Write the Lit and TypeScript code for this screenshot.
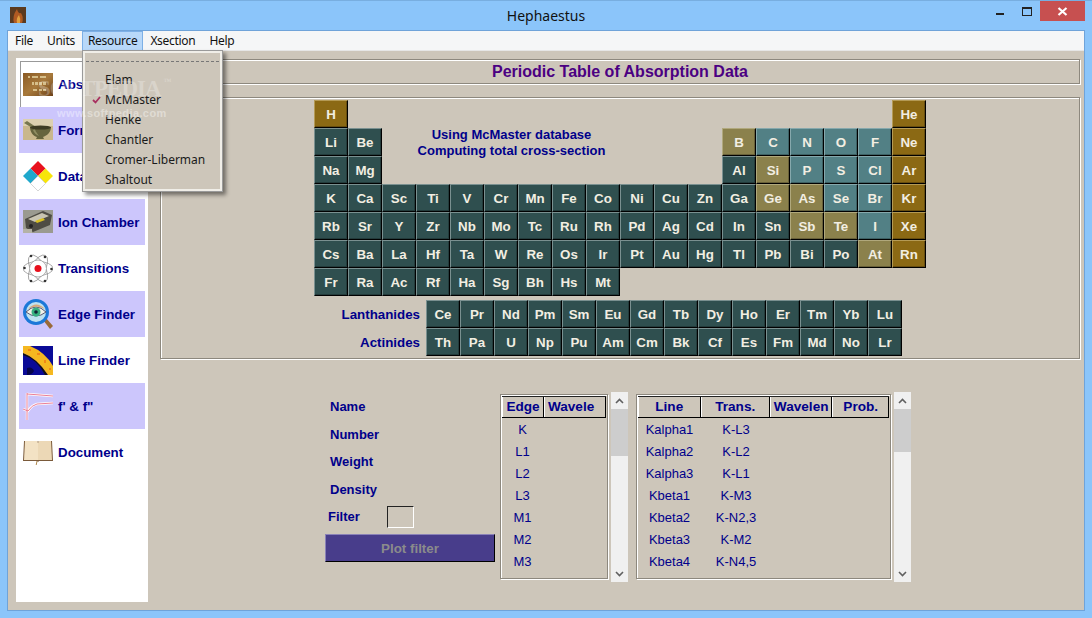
import { LitElement, html, css, svg } from "lit";
import { customElement } from "lit/decorators.js";

type Cell = { s: string; c: number; r: number; k: string };
const build = (rows: [number, string, string][]): Cell[] =>
  rows.flatMap(([r, start, list]) => {
    const out: Cell[] = [];
    for (const part of list.split(" ")) {
      const [s, k] = part.split(":");
      out.push({ s, c: 0, r, k: k || "d" });
    }
    let col = parseInt(start);
    out.forEach((x) => { x.c = col++; });
    return out;
  });

const CELLS = build([
  [1, "1", "H:b"],
  [1, "18", "He:b"],
  [2, "1", "Li Be"],
  [2, "13", "B:o C:t N:t O:t F:t Ne:b"],
  [3, "1", "Na Mg"],
  [3, "13", "Al Si:o P:t S:t Cl:t Ar:b"],
  [4, "1", "K Ca Sc Ti V Cr Mn Fe Co Ni Cu Zn Ga Ge:o As:o Se:t Br:t Kr:b"],
  [5, "1", "Rb Sr Y Zr Nb Mo Tc Ru Rh Pd Ag Cd In Sn Sb:o Te:o I:t Xe:b"],
  [6, "1", "Cs Ba La Hf Ta W Re Os Ir Pt Au Hg Tl Pb Bi Po At:o Rn:b"],
  [7, "1", "Fr Ra Ac Rf Ha Sg Bh Hs Mt"],
]);
const LANTH = "Ce Pr Nd Pm Sm Eu Gd Tb Dy Ho Er Tm Yb Lu".split(" ");
const ACTIN = "Th Pa U Np Pu Am Cm Bk Cf Es Fm Md No Lr".split(" ");

const ICONS: Record<string, unknown> = {
  abs: svg`<svg width="30" height="24" viewBox="0 0 30 24"><defs><linearGradient id="ab" x1="0" y1="0" x2="1" y2="1"><stop offset="0" stop-color="#8a5a24"/><stop offset=".5" stop-color="#a87a3c"/><stop offset="1" stop-color="#6e4218"/></linearGradient></defs><rect width="30" height="23" fill="url(#ab)"/><g fill="#e0cc98" opacity=".85"><rect x="5" y="3" width="2" height="2"/><rect x="9" y="3" width="6" height="2"/><rect x="17" y="3" width="6" height="2"/><rect x="9" y="9" width="2" height="3"/><rect x="12" y="9" width="3" height="3"/><rect x="16" y="9" width="3" height="3"/><rect x="20" y="9" width="3" height="3"/><rect x="10" y="16" width="4" height="2"/><rect x="16" y="16" width="3" height="2"/><rect x="20" y="16" width="3" height="2"/></g></svg>`,
  form: svg`<svg width="30" height="24" viewBox="0 0 30 24"><rect y="1" width="30" height="21" fill="#c9b78c"/><rect y="1" width="30" height="7" fill="#dcd0b0"/><path d="M1 5 L4 3 L13 9 L11 11 Z" fill="#77764e"/><path d="M7 9 H28 C28 15 23 18 20 19 L21 21 H13 L14 19 C10 18 7 14 7 9 Z" fill="#66643e"/><path d="M10 12 C11 15 13 17 16 18 C13 14 12 12 12 11 Z" fill="#8f8d62"/><ellipse cx="17.500" cy="9.500" rx="10.500" ry="2" fill="#3e3c24"/></svg>`,
  data: svg`<svg width="30" height="30" viewBox="0 0 30 30"><path d="M15 0 L22.500 7.500 L15 15 L7.500 7.500 Z" fill="#e8121e"/><path d="M22.500 7.500 L30 15 L22.500 22.500 L15 15 Z" fill="#f7e40a"/><path d="M7.500 7.500 L15 15 L7.500 22.500 L0 15 Z" fill="#1fa8cc"/><path d="M15 15 L22.500 22.500 L15 30 L7.500 22.500 Z" fill="#fff" stroke="#ccc" stroke-width=".8"/></svg>`,
  ion: svg`<svg width="30" height="24" viewBox="0 0 30 24"><rect width="30" height="23" fill="#9a9a90"/><path d="M2 9 L20 1 L29 5 L27 15 L10 22 L3 18 Z" fill="#4e4c44"/><path d="M5 9 L19 3 L26 6 L12 12 Z" fill="#c8c4b2"/><path d="M12 11 L20 8 L22 10 L14 13 Z" fill="#d8c020"/><circle cx="8" cy="16" r="2" fill="#222"/><rect y="19" width="9" height="4" fill="#b4b2a6"/></svg>`,
  trans: svg`<svg width="30" height="31" viewBox="0 0 30 31"><g fill="none" stroke="#8a8a8a" stroke-width=".7"><ellipse cx="15" cy="15.500" rx="15" ry="7"/><ellipse cx="15" cy="15.500" rx="15" ry="7" transform="rotate(60 15 15.500)"/><ellipse cx="15" cy="15.500" rx="15" ry="7" transform="rotate(120 15 15.500)"/></g><circle cx="15" cy="15.500" r="8.500" fill="#fff" stroke="#999" stroke-width=".8"/><circle cx="15" cy="15.500" r="3.500" fill="#e8101c"/><g fill="#333"><circle cx="1.500" cy="15" r="1.300"/><circle cx="28.500" cy="16" r="1.300"/><circle cx="8" cy="3" r="1.300"/><circle cx="22" cy="4" r="1.300"/><circle cx="8" cy="28" r="1.300"/><circle cx="22" cy="28" r="1.300"/></g></svg>`,
  edge: svg`<svg width="30" height="31" viewBox="0 0 30 31"><path d="M20 21 L23 19 L30 27 L27 30 Z" fill="#9a6a38"/><circle cx="13" cy="13" r="13" fill="#1b78d8"/><circle cx="13" cy="13" r="10" fill="#bfe2f0"/><path d="M3 13 Q13 3 23 13 Q13 21 3 13 Z" fill="#f2f2ea" stroke="#335" stroke-width=".8"/><path d="M5 10 Q13 1 22 10 Q13 5 5 10 Z" fill="#d8a878"/><circle cx="13" cy="13" r="4.500" fill="#38b080"/><circle cx="13" cy="13" r="1.800" fill="#123"/></svg>`,
  line: svg`<svg width="30" height="29" viewBox="0 0 30 29"><rect width="30" height="29" fill="#0a0a96"/><path d="M0 9 Q14 13 22 29 L25 29 Q14 12 0 7 Z" fill="#111"/><path d="M0 0 L7 0 Q22 6 30 20 L30 29 L25 29 Q14 12 0 7 Z" fill="#f5b820"/><g fill="#f08818"><rect x="5" y="3" width="3" height="2"/><rect x="14" y="7" width="3" height="2"/><rect x="21" y="14" width="2" height="3"/><rect x="26" y="22" width="2" height="2"/></g><path d="M4 22 Q9 20 11 25 Q9 29 4 29 Z" fill="#05054a"/></svg>`,
  f: svg`<svg width="30" height="29" viewBox="0 0 30 29"><g fill="none" stroke-linejoin="round"><path d="M4 1 V28 M4 2 L30 4 M0 17 L5 19 Q9 13 14 12 L30 11" stroke="#fff" stroke-width="2.400"/><path d="M4 1 V28 M4 2 L30 4 M0 17 L5 19 Q9 13 14 12 L30 11" stroke="#e8708a" stroke-width=".9"/></g></svg>`,
  doc: svg`<svg width="30" height="25" viewBox="0 0 30 25"><path d="M1 1 H14 L15 2 L16 1 H29 L30 21 H16 L15 22 L14 21 H0 Z" fill="#7a5a3a"/><path d="M2 1 H14 L15 3 V20 H1 Z" fill="#f3e2c4"/><path d="M28 1 H16 L15 3 V20 H29 Z" fill="#ecd8b6"/><path d="M14 21 L13 26" stroke="#b08a50" stroke-width="1"/></svg>`,
};

const TABS: [string, string][] = [
  ["abs", "Absorption"], ["form", "Formulas"], ["data", "Data"], ["ion", "Ion Chamber"],
  ["trans", "Transitions"], ["edge", "Edge Finder"], ["line", "Line Finder"], ["f", "f' & f\""], ["doc", "Document"],
];

const EDGES = ["K", "L1", "L2", "L3", "M1", "M2", "M3"];
const LINES: [string, string][] = [
  ["Kalpha1", "K-L3"], ["Kalpha2", "K-L2"], ["Kalpha3", "K-L1"], ["Kbeta1", "K-M3"],
  ["Kbeta2", "K-N2,3"], ["Kbeta3", "K-M2"], ["Kbeta4", "K-N4,5"],
];

@customElement("app-root")
export class AppRoot extends LitElement {
  static styles = css`
    :host { display: block; position: relative; width: 1092px; height: 618px; overflow: hidden;
      background: #8bc5fa; font-family: "Liberation Sans", Arial, sans-serif; --bg: #cdc6ba; --ink: #00008b; }
    .titlebar { height: 30px; display: flex; align-items: flex-start; position: relative; box-sizing: border-box; border-top: 1px solid #78aee0; }
    .appicon { margin: 6px 0 0 10px; width: 16px; height: 16px; display: block; }
    .title { position: absolute; left: 0; right: 0; top: 5px; text-align: center; font: 14px/20px "Noto Sans", sans-serif; color: #111; }
    .ctl { margin-left: auto; display: flex; align-items: flex-start; margin-right: 7px; }
    .min { width: 8px; height: 2px; background: #222; margin: 12px 18px 0 0; }
    .max { width: 8px; height: 6px; border: 1.500px solid #222; border-top-width: 2.500px; margin: 6px 8px 0 0; }
    .close { width: 45px; height: 20px; background: #c75050; display: flex; align-items: center; justify-content: center; }
    .client { margin: 0 7px; height: 581px; box-sizing: border-box; border: 1px solid #6fa3d9; background: var(--bg); display: flex; flex-direction: column; }
    .menubar { height: 19px; flex: none; background: #f5f6f7; display: flex; align-items: stretch; padding-left: 1px; border-bottom: 1px solid #e6e6e6; font: 12px/18px "Noto Sans", sans-serif; letter-spacing: -.3px; color: #111; }
    .mi { padding: 0 5px; border: 1px solid transparent; border-bottom: 0; margin-right: 2px; white-space: nowrap; }
    .mi.tight { margin-right: 1px; }
    .mi.on { background: #b8d8f9; border: 1px solid #7db0e6; border-bottom: 0; margin-right: 1px; }
    .body { flex: 1; display: flex; min-height: 0; padding: 7px 4px 8px 8px; gap: 12px; }
    .side { width: 132px; background: #fff; box-sizing: border-box; padding-top: 3px; flex: none; }
    .tab { height: 46px; margin: 0 3px; display: flex; align-items: center; gap: 5px; padding-left: 4px; font-size: 13.330px; font-weight: 700; color: var(--ink); white-space: nowrap; overflow: hidden; box-sizing: border-box; }
    .tab.alt { background: #ccc6fc; }
    .tab.sel { margin: 0 0 0 4px; padding-left: 2px; border-left: 1px solid #999; border-top: 1px solid #999; background: #fff; }
    .ic { width: 30px; flex: none; display: flex; align-items: center; justify-content: center; }
    .ic svg { display: block; }
    .main { flex: 1; min-width: 0; display: flex; flex-direction: column; }
    .groove { border: 1px solid #8d887e; box-shadow: inset 1px 1px 0 #fff, 1px 1px 0 #fff; box-sizing: border-box; }
    .head { height: 25px; margin-top: 1px; text-align: center; font: 700 16px/24px "Liberation Sans", sans-serif; color: #4b0082; flex: none; }
    .panel { margin-top: 13px; height: 262px; padding: 2px 0 0 153px; flex: none; }
    .ptable { display: grid; grid-template-columns: repeat(18, 34px); grid-template-rows: repeat(7, 28px); position: relative; }
    .cell { box-sizing: border-box; width: 34px; height: 28px; display: flex; align-items: center; justify-content: center; font-size: 13.330px; font-weight: 700; color: #f2eee2;
      border-style: solid; border-width: 1px; border-color: #7a9090 #000 #000 #7a9090; box-shadow: inset -1px -1px 0 rgba(0,0,0,.25); }
    .d { background: #2f4f4f; }
    .t { background: #528085; border-color: #86a8ac #000 #000 #86a8ac; }
    .o { background: #8b814c; border-color: #b0a87c #000 #000 #b0a87c; }
    .b { background: #8b6914; border-color: #b49a55 #000 #000 #b49a55; }
    .info { grid-column: 3 / span 8; grid-row: 2 / span 2; padding-right: 13px; margin-top: -1px; text-align: center; font-size: 13px; font-weight: 700; line-height: 16px; color: var(--ink); }
    .series { display: flex; align-items: center; height: 28px; margin-left: -153px; }
    .series.first { margin-top: 4px; }
    .series .lbl { width: 265px; text-align: right; padding-right: 6px; box-sizing: border-box; font-size: 13.330px; font-weight: 700; color: var(--ink); }
    .lower { margin-top: 33px; display: flex; align-items: flex-start; padding-left: 165px; }
    .form { width: 170px; margin-right: 5px; padding-top: 5px; color: var(--ink); font-size: 13px; font-weight: 700; }
    .f { height: 27.500px; line-height: 20px; padding-left: 5px; }
    .f.filter { height: 22px; display: flex; align-items: center; gap: 0; padding-left: 3px; margin-top: -1px; }
    .f.filter span { width: 59px; }
    .swatch { width: 27px; height: 22px; box-sizing: border-box; border: 1px solid; border-color: #222 #fff #fff #222; }
    .plot { margin-top: 6px; height: 28px; box-sizing: border-box; background: #483d8b; border: 1px solid; border-color: #8a82b8 #000 #000 #8a82b8; color: #8b8b8b; font-size: 13.330px; font-weight: 700; display: flex; align-items: center; justify-content: center; }
    .list { height: 185px; margin-top: 2px; box-sizing: border-box; padding: 1px; flex: none; }
    .list.a { width: 108px; }
    .list.b2 { width: 255px; }
    .hdrs { display: flex; height: 22px; box-sizing: border-box; border-bottom: 1px solid #000; border-top: 1px solid #222; }
    .hd { box-sizing: border-box; border-left: 1px solid #fff; border-right: 1px solid #000; font-size: 13.600px; font-weight: 700; color: var(--ink); text-align: center; line-height: 20px; white-space: nowrap; overflow: hidden; }
    .hd.wl { padding-right: 8px; }
    .rows { display: grid; grid-auto-rows: 22px; padding-top: 1px; font-size: 13px; color: var(--ink); }
    .row { display: flex; line-height: 22px; text-align: center; }
    .sb { width: 17px; height: 190px; background: #f0f0f0; display: flex; flex-direction: column; margin-left: 3px; flex: none; }
    .sb .arrow { height: 17px; display: flex; align-items: center; justify-content: center; flex: none; }
    .thumb { background: #cdcdcd; flex: none; }
    .track { flex: 1; }
    .gap8 { width: 8px; flex: none; }
    .menu { position: absolute; left: 82px; top: 50px; width: 141px; height: 142px; box-sizing: border-box; background: var(--bg); border: 1px solid #9a9a9a; box-shadow: inset 0 0 0 2px #f0eee8, 3px 3px 4px rgba(0,0,0,.45); padding: 3px 2px 0 2px; font: 12px/20px "Noto Sans", sans-serif; color: #1a1a1a; }
    .tear { height: 7px; border-bottom: 1px dashed #777; margin: 0 1px; }
    .items { padding-top: 8px; }
    .it { height: 20px; padding-left: 20px; position: relative; white-space: nowrap; }
    .check { position: absolute; left: 7px; top: 6px; display: block; }
    .wm { position: absolute; left: 38px; top: 75px; pointer-events: none; color: rgba(255,255,255,.26); }
    .wm1 { font: 700 23px/28px "Liberation Serif", serif; letter-spacing: -1px; white-space: nowrap; }
    .wm1 sup { font-size: 8px; line-height: 0; letter-spacing: 0; vertical-align: 12px; margin-left: 3px; }
    .wm2 { font: 700 11px/14px "Liberation Sans", sans-serif; margin: 3px 0 0 19px; letter-spacing: .4px; white-space: nowrap; color: rgba(255,255,255,.4); }
  `;

  private cell(s: string, k: string, pos?: string) {
    return html`<div class="cell ${k}" style=${pos || ""}>${s}</div>`;
  }

  private arrow(up: boolean) {
    return html`<div class="arrow"><svg width="9" height="6" viewBox="0 0 9 6"><path d=${up ? "M1 5 L4.500 1.500 L8 5" : "M1 1 L4.500 4.500 L8 1"} fill="none" stroke="#606060" stroke-width="1.600"/></svg></div>`;
  }

  private scrollbar(h: number) {
    return html`<div class="sb">${this.arrow(true)}<div class="thumb" style="height:${h}px"></div><div class="track"></div>${this.arrow(false)}</div>`;
  }

  render() {
    return html`
      <div class="titlebar">
        <svg class="appicon" viewBox="0 0 16 16"><rect width="16" height="16" fill="#5a3a20"/><path d="M4 16 Q2 9 7 2 Q8 7 11 6 Q14 11 12 16 Z" fill="#b05a22"/><path d="M7 16 Q6 11 9 8 Q11 12 10 16 Z" fill="#e0a040"/></svg>
        <div class="title">Hephaestus</div>
        <div class="ctl">
          <div class="min"></div><div class="max"></div>
          <div class="close"><svg width="11" height="9" viewBox="0 0 11 9"><path d="M1.500 1 L9.500 8 M9.500 1 L1.500 8" stroke="#fff" stroke-width="2.200"/></svg></div>
        </div>
      </div>
      <div class="client">
        <div class="menubar">
          <div class="mi">File</div><div class="mi tight">Units</div><div class="mi on">Resource</div><div class="mi">Xsection</div><div class="mi">Help</div>
        </div>
        <div class="body">
          <div class="side">
            ${TABS.map(([ic, t], i) => html`<div class="tab ${i === 0 ? "sel" : i % 2 ? "alt" : ""}"><div class="ic">${ICONS[ic]}</div><span>${t}</span></div>`)}
          </div>
          <div class="main">
            <div class="groove head">Periodic Table of Absorption Data</div>
            <div class="groove panel">
              <div class="ptable">
                ${CELLS.map((x) => this.cell(x.s, x.k, `grid-column:${x.c};grid-row:${x.r}`))}
                <div class="info">Using McMaster database<br />Computing total cross-section</div>
              </div>
              <div class="series first"><div class="lbl">Lanthanides</div>${LANTH.map((s) => this.cell(s, "d"))}</div>
              <div class="series"><div class="lbl">Actinides</div>${ACTIN.map((s) => this.cell(s, "d"))}</div>
            </div>
            <div class="lower">
              <div class="form">
                <div class="f">Name</div><div class="f">Number</div><div class="f">Weight</div><div class="f">Density</div>
                <div class="f filter"><span>Filter</span><div class="swatch"></div></div>
                <div class="plot">Plot filter</div>
              </div>
              <div class="groove list a">
                <div class="hdrs"><div class="hd" style="width:43px">Edge</div><div class="hd wl" style="width:63px">Wavele</div></div>
                <div class="rows">${EDGES.map((e) => html`<div class="row"><span style="width:41px">${e}</span></div>`)}</div>
              </div>
              ${this.scrollbar(47)}
              <div class="gap8"></div>
              <div class="groove list b2">
                <div class="hdrs"><div class="hd" style="width:63px">Line</div><div class="hd" style="width:70px">Trans.</div><div class="hd" style="width:63px">Wavelen</div><div class="hd" style="width:57px">Prob.</div></div>
                <div class="rows">${LINES.map(([a, b]) => html`<div class="row"><span style="width:63px">${a}</span><span style="width:70px">${b}</span></div>`)}</div>
              </div>
              ${this.scrollbar(43)}
            </div>
          </div>
        </div>
      </div>
      <div class="menu">
        <div class="tear"></div>
        <div class="items">
          <div class="it">Elam</div>
          <div class="it"><svg class="check" width="9" height="8" viewBox="0 0 9 8"><path d="M1 4 L3.500 6.500 L8 1" fill="none" stroke="#a83060" stroke-width="1.800"/></svg>McMaster</div>
          <div class="it">Henke</div><div class="it">Chantler</div><div class="it">Cromer-Liberman</div><div class="it">Shaltout</div>
        </div>
      </div>
      <div class="wm"><div class="wm1">SOFTPEDIA<sup>™</sup></div><div class="wm2">www.softpedia.com</div></div>
    `;
  }
}
